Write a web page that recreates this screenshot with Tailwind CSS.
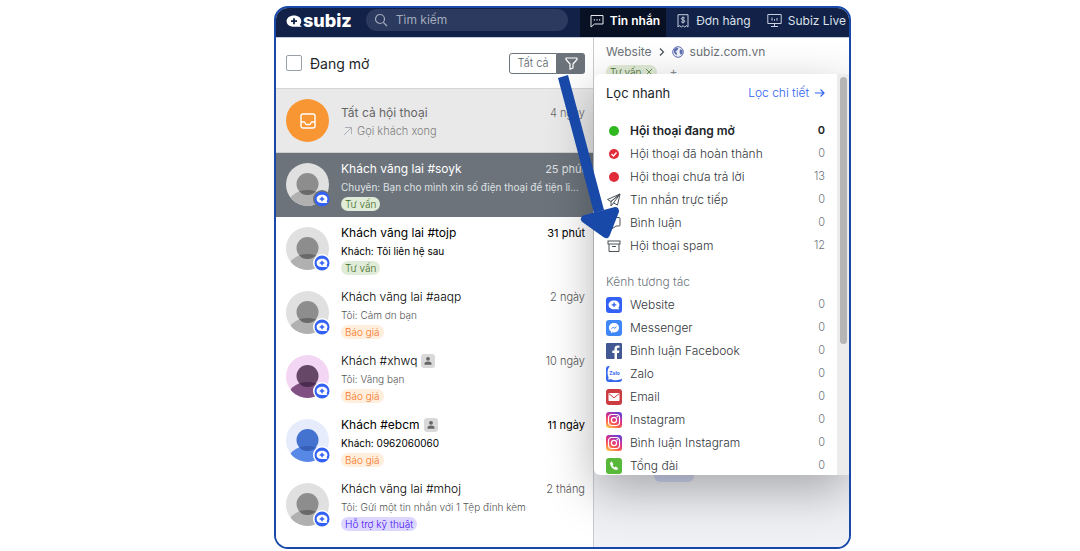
<!DOCTYPE html>
<html lang="vi">
  <head>
    <meta charset="UTF-8" />
    <meta name="viewport" content="width=device-width, initial-scale=1.0" />
    <title>Subiz - Tin nhắn</title>
    <script src="https://cdn.jsdelivr.net/npm/@tailwindcss/browser@4"></script>
  </head>

  <body class="bg-white pl-[274px] pr-[229px] pt-1.5 font-['Inter',sans-serif] text-[12px] font-light text-[#33373d]">
    <!-- Shared icons -->
    <svg class="absolute h-0 w-0" aria-hidden="true">
      <clipPath id="round"><circle cx="21.5" cy="21.5" r="21.5" /></clipPath>
      <clipPath id="face"><circle cx="21.5" cy="21" r="11" /></clipPath>
      <symbol id="avatar-gray" viewBox="0 0 43 43">
        <circle cx="21.5" cy="21.5" r="21.5" fill="#e0e0e0" />
        <g clip-path="url(#round)"><ellipse cx="21.5" cy="45" rx="21" ry="18" fill="#b0b0b0" /></g>
        <circle cx="21.5" cy="21" r="11" fill="#8d8d8d" />
        <g clip-path="url(#face)"><ellipse cx="21.5" cy="45" rx="21" ry="18" fill="#696969" /></g>
      </symbol>
      <symbol id="avatar-purple" viewBox="0 0 43 43">
        <circle cx="21.5" cy="21.5" r="21.5" fill="#f3d6f3" />
        <g clip-path="url(#round)"><ellipse cx="21.5" cy="45" rx="21" ry="18" fill="#7f5081" /></g>
        <circle cx="21.5" cy="21" r="11" fill="#664768" />
        <g clip-path="url(#face)"><ellipse cx="21.5" cy="45" rx="21" ry="18" fill="#4c2b50" /></g>
      </symbol>
      <symbol id="avatar-blue" viewBox="0 0 43 43">
        <circle cx="21.5" cy="21.5" r="21.5" fill="#e6ecfb" />
        <g clip-path="url(#round)"><ellipse cx="21.5" cy="45" rx="21" ry="18" fill="#5888e6" /></g>
        <circle cx="21.5" cy="21" r="11" fill="#4472cf" />
        <g clip-path="url(#face)"><ellipse cx="21.5" cy="45" rx="21" ry="18" fill="#375fb8" /></g>
      </symbol>
      <symbol id="subiz-badge" viewBox="0 0 18 18">
        <circle cx="9" cy="9" r="9" fill="currentColor" />
        <circle cx="9" cy="9" r="7.500" fill="#3461f5" />
        <path d="M9 4.700c3.300 0 5.400 1.700 5.400 4.300 0 1-.3 1.700-.8 2.400l.8 1.700H9c-3.300 0-5.400-1.500-5.400-4.100S5.700 4.700 9 4.700z" fill="#fff" />
        <path d="M9 6.700v4.600M6.700 9h4.600" stroke="#3461f5" stroke-width="1.500" />
      </symbol>
      <symbol id="contact" viewBox="0 0 14 14">
        <rect width="14" height="14" rx="3" fill="#d9d9d9" />
        <circle cx="7" cy="4.800" r="1.900" fill="#666" />
        <path d="M3.500 10.800V9.600c0-1.500 1.500-2.200 3.500-2.200s3.500.7 3.500 2.200v1.200z" fill="#666" />
      </symbol>
      <linearGradient id="ig" x1="0.2" y1="1" x2="0.700" y2="0">
        <stop offset="0" stop-color="#ffc554" />
        <stop offset="0.300" stop-color="#fd5a49" />
        <stop offset="0.600" stop-color="#d92f8a" />
        <stop offset="1" stop-color="#6a3fd6" />
      </linearGradient>
      <symbol id="instagram" viewBox="0 0 16 16">
        <rect width="16" height="16" rx="3" fill="url(#ig)" />
        <rect x="2.500" y="2.500" width="11" height="11" rx="3.200" fill="none" stroke="#fff" stroke-width="1.200" />
        <circle cx="8" cy="8" r="2.600" fill="none" stroke="#fff" stroke-width="1.200" />
        <circle cx="11.200" cy="4.800" r="0.800" fill="#fff" />
      </symbol>
    </svg>

    <div class="relative">
      <div class="overflow-hidden rounded-[14px] border-2 border-[#1849a9]">
        <!-- Top bar -->
        <header class="flex h-[30px] items-stretch border-b border-[#c5cce0] bg-[#112148] text-[#dde1ea]">
          <a href="#" class="flex items-center gap-px pb-1 pl-2.5 text-white">
            <svg class="h-4 w-4" viewBox="0 0 16 16" aria-hidden="true">
              <path d="M8 2.500c4.300 0 7.300 2.400 7.300 5.800 0 1.500-.6 2.700-1.500 3.600l2 1.800H8C3.700 13.700.6 11.500.6 8.200S3.700 2.500 8 2.500z" fill="#fff" />
              <path d="M8 5.200v6M5 8.200h6" stroke="#112148" stroke-width="1.800" />
            </svg>
            <span class="text-[18px] font-extrabold leading-5">subiz</span>
          </a>
          <label class="ml-3.5 mt-px flex h-[22px] w-[202px] items-center gap-2 rounded-full bg-[#2b3a5e] px-2">
            <svg class="h-[14px] w-[14px] shrink-0" viewBox="0 0 14 14" fill="none" stroke="#a4acbd" stroke-width="1.200" aria-hidden="true">
              <circle cx="6" cy="6" r="4.500" /><path d="M9.300 9.300L13 13" />
            </svg>
            <input type="search" aria-label="Tìm kiếm" placeholder="Tìm kiếm" class="w-full min-w-0 bg-transparent font-normal placeholder:text-[#a4acbd] outline-none" />
          </label>
          <nav class="ml-3 flex flex-1 whitespace-nowrap font-normal">
            <a href="#" class="flex items-center gap-1.5 bg-[#081124] pb-1 pl-2.5 pr-1.5 font-semibold text-white">
              <svg class="h-[14px] w-[14px]" viewBox="0 0 14 14" fill="none" stroke="#e6e8ee" aria-hidden="true">
                <path d="M1 1.500h12v8.500H4.500L1 13z" /><path d="M3.800 5.800h1.200M6.400 5.800h1.200M9 5.800h1.200" stroke-width="1.300" />
              </svg>
              Tin nhắn
            </a>
            <a href="#" class="flex items-center gap-1.5 pb-1 pl-2.5">
              <svg class="h-[14px] w-[14px]" viewBox="0 0 14 14" fill="none" stroke="#c8cede" aria-hidden="true">
                <path d="M2 13V.7h10V13l-1.700-1.300L8.700 13 7 11.700 5.300 13l-1.600-1.300z" />
                <path d="M8.800 4.200C8 3.200 5.300 3.300 5.300 4.700c0 1.700 3.600.8 3.600 2.500 0 1.500-2.900 1.600-3.800.4M7 2.500v7" />
              </svg>
              Đơn hàng
            </a>
            <a href="#" class="flex items-center gap-1.5 pb-1 pl-4">
              <svg class="h-[15px] w-[15px]" viewBox="0 0 15 15" fill="none" stroke="#c8cede" aria-hidden="true">
                <path d="M.8 1.500h13.400v9H.8zM7.500 10.500v3M4 13.500h7M5 4.500v3.200M7.500 6v1.700M10 5v2.700" />
              </svg>
              Subiz Live
            </a>
          </nav>
        </header>

        <div class="flex">
          <!-- Conversation list -->
          <section class="w-[318px] shrink-0 border-r border-[#c9cbce] bg-white">
            <div class="flex h-[51px] items-center border-b border-[#d5d5d5] pl-2.5 pr-2">
              <input id="open" type="checkbox" class="h-4 w-4 appearance-none rounded-[2px] border border-[#9aa0a8] bg-white" />
              <label for="open" class="ml-2 text-[14px] font-normal text-[#212529]">Đang mở</label>
              <button class="ml-auto h-[21px] w-12 rounded-l-[3px] border border-[#6c757d] text-[11px] font-light text-[#59616a]">Tất cả</button>
              <button aria-label="Lọc" class="flex h-[21px] w-7 items-center justify-center rounded-r-[3px] bg-[#6c737b]">
                <svg class="h-[13px] w-[13px]" viewBox="0 0 13 13" fill="none" stroke="#fff" stroke-width="1.200" aria-hidden="true">
                  <path d="M1 1h11v1.500L8 7v4l-3 1.300V7L1 2.500z" stroke-linejoin="round" />
                </svg>
              </button>
            </div>
            <ul>
              <li class="flex h-16 gap-3 border-b border-[#cfcfcf] bg-[#e9e9e9] pl-2.5 pr-2 pt-2.5 font-normal text-[#666]">
                <span class="flex h-[43px] w-[43px] shrink-0 items-center justify-center rounded-full bg-[#f89633]">
                  <svg class="h-4 w-4" viewBox="0 0 16 16" fill="none" stroke="#fff" stroke-width="1.400" stroke-linejoin="round" aria-hidden="true">
                    <rect x="1" y="1" width="14" height="14" rx="2" /><path d="M1 9h3.500L6 11.500h4L11.500 9H15" />
                  </svg>
                </span>
                <div class="min-w-0 flex-1 pt-1">
                  <div class="flex leading-5"><span>Tất cả hội thoại</span><span class="ml-auto text-[11px] font-light">4 ngày</span></div>
                  <div class="flex items-center gap-1 pl-0.5 text-[11px] font-light leading-4 text-[#808080]">
                    <svg class="h-2.5 w-2.5" viewBox="0 0 10 10" fill="none" stroke="#aab0b6" aria-hidden="true"><path d="M1 9l7.500-7.500M2 1.500h6.500V8" /></svg>
                    Gọi khách xong
                  </div>
                </div>
              </li>
              <li class="flex h-16 gap-3 bg-[#6c737b] pl-2.5 pr-2 pt-2.5 font-normal text-[#dfe1e3]">
                <span class="relative h-[43px] w-[43px] shrink-0">
                  <svg class="h-full w-full"><use href="#avatar-gray" /></svg>
                  <svg class="absolute -bottom-0.5 -right-0.5 h-[18px] w-[18px] text-[#6c737b]"><use href="#subiz-badge" /></svg>
                </span>
                <div class="min-w-0 flex-1 -mt-1">
                  <div class="flex leading-5"><span class="text-white">Khách vãng lai #soyk</span><span class="ml-auto text-[11px]">25 phút</span></div>
                  <p class="whitespace-nowrap text-[10px] leading-4">Chuyên: Bạn cho mình xin số điện thoại để tiện li...</p>
                  <span class="mt-0.5 inline-block rounded-full bg-[#e1ecd8] px-1 text-[10px] font-light leading-[14px] text-[#3e6b25]">Tư vấn</span>
                </div>
              </li>
              <li class="flex h-16 gap-3 pl-2.5 pr-2 pt-2.5 font-normal text-black">
                <span class="relative h-[43px] w-[43px] shrink-0">
                  <svg class="h-full w-full"><use href="#avatar-gray" /></svg>
                  <svg class="absolute -bottom-0.5 -right-0.5 h-[18px] w-[18px] text-white"><use href="#subiz-badge" /></svg>
                </span>
                <div class="min-w-0 flex-1 -mt-1">
                  <div class="flex leading-5"><span>Khách vãng lai #tojp</span><span class="ml-auto text-[11px]">31 phút</span></div>
                  <p class="truncate text-[10px] leading-4">Khách: Tôi liên hệ sau</p>
                  <span class="mt-0.5 inline-block rounded-full bg-[#e1ecd8] px-1 text-[10px] font-light leading-[14px] text-[#3e6b25]">Tư vấn</span>
                </div>
              </li>
              <li class="flex h-16 gap-3 pl-2.5 pr-2 pt-2.5 text-[#555]">
                <span class="relative h-[43px] w-[43px] shrink-0">
                  <svg class="h-full w-full"><use href="#avatar-gray" /></svg>
                  <svg class="absolute -bottom-0.5 -right-0.5 h-[18px] w-[18px] text-white"><use href="#subiz-badge" /></svg>
                </span>
                <div class="min-w-0 flex-1 -mt-1">
                  <div class="flex leading-5"><span class="text-black">Khách vãng lai #aaqp</span><span class="ml-auto text-[11px]">2 ngày</span></div>
                  <p class="truncate text-[10px] leading-4">Tôi: Cảm ơn bạn</p>
                  <span class="mt-0.5 inline-block rounded-full bg-[#ffeedb] px-1 text-[10px] leading-[14px] text-[#fa7328]">Báo giá</span>
                </div>
              </li>
              <li class="flex h-16 gap-3 pl-2.5 pr-2 pt-2.5 text-[#555]">
                <span class="relative h-[43px] w-[43px] shrink-0">
                  <svg class="h-full w-full"><use href="#avatar-purple" /></svg>
                  <svg class="absolute -bottom-0.5 -right-0.5 h-[18px] w-[18px] text-white"><use href="#subiz-badge" /></svg>
                </span>
                <div class="min-w-0 flex-1 -mt-1">
                  <div class="flex items-center gap-1 leading-5"><span class="text-black">Khách #xhwq</span><svg class="h-[14px] w-[14px]"><use href="#contact" /></svg><span class="ml-auto text-[11px]">10 ngày</span></div>
                  <p class="truncate text-[10px] leading-4">Tôi: Vâng bạn</p>
                  <span class="mt-0.5 inline-block rounded-full bg-[#ffeedb] px-1 text-[10px] leading-[14px] text-[#fa7328]">Báo giá</span>
                </div>
              </li>
              <li class="flex h-16 gap-3 pl-2.5 pr-2 pt-2.5 font-normal text-black">
                <span class="relative h-[43px] w-[43px] shrink-0">
                  <svg class="h-full w-full"><use href="#avatar-blue" /></svg>
                  <svg class="absolute -bottom-0.5 -right-0.5 h-[18px] w-[18px] text-white"><use href="#subiz-badge" /></svg>
                </span>
                <div class="min-w-0 flex-1 -mt-1">
                  <div class="flex items-center gap-1 leading-5"><span>Khách #ebcm</span><svg class="h-[14px] w-[14px]"><use href="#contact" /></svg><span class="ml-auto text-[11px]">11 ngày</span></div>
                  <p class="truncate text-[10px] leading-4">Khách: 0962060060</p>
                  <span class="mt-0.5 inline-block rounded-full bg-[#ffeedb] px-1 text-[10px] font-light leading-[14px] text-[#fa7328]">Báo giá</span>
                </div>
              </li>
              <li class="flex h-[74px] gap-3 pl-2.5 pr-2 pt-2.5 text-[#555]">
                <span class="relative h-[43px] w-[43px] shrink-0">
                  <svg class="h-full w-full"><use href="#avatar-gray" /></svg>
                  <svg class="absolute -bottom-0.5 -right-0.5 h-[18px] w-[18px] text-white"><use href="#subiz-badge" /></svg>
                </span>
                <div class="min-w-0 flex-1 -mt-1">
                  <div class="flex leading-5"><span class="text-black">Khách vãng lai #mhoj</span><span class="ml-auto text-[11px]">2 tháng</span></div>
                  <p class="truncate text-[10px] leading-4">Tôi: Gửi một tin nhắn với 1 Tệp đính kèm</p>
                  <span class="mt-0.5 inline-block rounded-full bg-[#dcd7ff] px-1 text-[10px] leading-[14px] text-[#4a12f5]">Hỗ trợ kỹ thuật</span>
                </div>
              </li>
            </ul>
          </section>

          <!-- Conversation pane with the filter menu over it -->
          <main class="relative min-w-0 flex-1 bg-[#f0f1f5]">
            <div class="h-[52px] bg-white px-3 pt-1 font-normal text-[#6c7278]">
              <div class="flex items-center gap-1.5 leading-5">
                <span>Website</span>
                <svg class="h-2 w-2" viewBox="0 0 8 8" fill="none" stroke="#495057" stroke-width="1.200" aria-hidden="true"><path d="M2 .5L5.500 4 2 7.500" /></svg>
                <svg class="h-3 w-3" viewBox="0 0 12 12" aria-hidden="true">
                  <circle cx="6" cy="6" r="5.300" fill="#eef0fa" stroke="#5f6fae" />
                  <path d="M2 3l3-1.500 1.500 1L5 4.500 3.500 5.500 5 7l-.5 2.500L2 6.500zM8 3l2.500 1.500V7L9 9 7.500 6.500z" fill="#5f6fae" />
                </svg>
                <a href="#">subiz.com.vn</a>
              </div>
              <div class="flex items-center gap-3 pt-[3px]">
                <span class="flex items-center gap-1 rounded-full bg-[#e1ecd8] px-1 text-[10px] font-light leading-[14px] text-[#3e6b25]">Tư vấn
                  <svg class="h-2 w-2" viewBox="0 0 8 8" stroke="#6f9656" aria-hidden="true"><path d="M1 1l6 6M7 1L1 7" /></svg>
                </span>
                <button aria-label="Thêm nhãn" class="leading-[14px] text-[#8a8f95]">+</button>
              </div>
            </div>
            <div class="ml-[60px] mt-[376px] h-4 w-10 rounded-[6px] bg-[#d0d7f2]"></div>

            <div class="absolute left-0 right-0 top-9 flex h-[401px] overflow-hidden rounded-l-[6px] bg-white shadow-[0_16px_48px_rgba(0,0,0,0.3)]">
              <div class="min-w-0 flex-1 pl-3 pr-3 pt-[9px]">
                <div class="flex items-center leading-5 text-[#212529]">
                  <h2 class="text-[13px] font-normal">Lọc nhanh</h2>
                  <a href="#" class="ml-auto flex items-center gap-1.5 text-[#2e62f4]">Lọc chi tiết
                    <svg class="h-2.5 w-2.5" viewBox="0 0 10 10" fill="none" stroke="currentColor" stroke-width="1.200" aria-hidden="true"><path d="M0 5h9M5.500 1.500L9 5 5.500 8.500" /></svg>
                  </a>
                </div>
                <ul class="mt-4">
                  <li class="flex h-[23px] items-center gap-2 font-semibold text-[#212529]">
                    <svg class="h-4 w-4" viewBox="0 0 16 16" aria-hidden="true"><circle cx="8" cy="8" r="5" fill="#2fb81f" /></svg>
                    <span>Hội thoại đang mở</span><span class="ml-auto text-[11px]">0</span>
                  </li>
                  <li class="flex h-[23px] items-center gap-2">
                    <svg class="h-4 w-4" viewBox="0 0 16 16" aria-hidden="true"><circle cx="8" cy="8" r="5" fill="#e02d39" /><path d="M5.500 8l2 2 3-3.500" fill="none" stroke="#fff" stroke-width="1.300" /></svg>
                    <span>Hội thoại đã hoàn thành</span><span class="ml-auto text-[11px] text-[#6c757d]">0</span>
                  </li>
                  <li class="flex h-[23px] items-center gap-2">
                    <svg class="h-4 w-4" viewBox="0 0 16 16" aria-hidden="true"><circle cx="8" cy="8" r="5" fill="#e02d39" /></svg>
                    <span>Hội thoại chưa trả lời</span><span class="ml-auto text-[11px] text-[#6c757d]">13</span>
                  </li>
                  <li class="flex h-[23px] items-center gap-2">
                    <svg class="h-4 w-4" viewBox="0 0 16 16" fill="none" stroke="#495057" stroke-linejoin="round" aria-hidden="true"><path d="M14 2L1.500 7.500 5 9.500zM14 2L5 9.500V14l2.500-3 4 2zM14 2L7.500 11" /></svg>
                    <span>Tin nhắn trực tiếp</span><span class="ml-auto text-[11px] text-[#6c757d]">0</span>
                  </li>
                  <li class="flex h-[23px] items-center gap-2">
                    <svg class="h-4 w-4" viewBox="0 0 16 16" fill="none" stroke="#495057" stroke-linejoin="round" aria-hidden="true"><path d="M3 2.500h10a1 1 0 0 1 1 1V10a1 1 0 0 1-1 1h-3l-3.500 2.500V11H3a1 1 0 0 1-1-1V3.500a1 1 0 0 1 1-1z" /></svg>
                    <span>Bình luận</span><span class="ml-auto text-[11px] text-[#6c757d]">0</span>
                  </li>
                  <li class="flex h-[23px] items-center gap-2">
                    <svg class="h-4 w-4" viewBox="0 0 16 16" fill="none" stroke="#495057" aria-hidden="true"><rect x="2" y="3" width="12" height="3" /><path d="M3 6v7.500h10V6M6 8.500h4" /></svg>
                    <span>Hội thoại spam</span><span class="ml-auto text-[11px] text-[#6c757d]">12</span>
                  </li>
                </ul>
                <h3 class="mt-[13px] leading-[23px] text-[#6c757d]">Kênh tương tác</h3>
                <ul>
                  <li class="flex h-[23px] items-center gap-2">
                    <svg class="h-4 w-4" viewBox="0 0 16 16" aria-hidden="true"><rect width="16" height="16" rx="3" fill="#3461f5" /><path d="M8 3.500c3.300 0 5.400 1.800 5.400 4.500 0 1.100-.4 2-1 2.700l1 1.600H8c-3.300 0-5.400-1.700-5.400-4.300S4.700 3.500 8 3.500z" fill="#fff" /><path d="M8 5.500v4.600M5.700 7.800h4.600" stroke="#3461f5" stroke-width="1.300" /></svg>
                    <span>Website</span><span class="ml-auto text-[11px] text-[#6c757d]">0</span>
                  </li>
                  <li class="flex h-[23px] items-center gap-2">
                    <svg class="h-4 w-4" viewBox="0 0 16 16" aria-hidden="true"><rect width="16" height="16" rx="3" fill="#3f86f7" /><path d="M8 3c3 0 5 2 5 4.700s-2 4.700-5 4.700l-1.300-.2-1.700.9v-1.600C3.700 10.600 3 9.300 3 7.700 3 5 5 3 8 3z" fill="#fff" /><path d="M5.500 8.800l1.800-1.800 1.400 1.400 1.800-1.700" fill="none" stroke="#3f86f7" /></svg>
                    <span>Messenger</span><span class="ml-auto text-[11px] text-[#6c757d]">0</span>
                  </li>
                  <li class="flex h-[23px] items-center gap-2">
                    <svg class="h-4 w-4" viewBox="0 0 16 16" aria-hidden="true"><rect width="16" height="16" rx="1" fill="#415893" /><path d="M8.500 16v-6H6.300V7.600h2.200V5.800c0-2.200 1.300-3.300 3.300-3.300h1.700v2.200h-1.200c-1 0-1.300.5-1.300 1.200v1.700h2.400l-.4 2.400h-2v6z" fill="#fff" /></svg>
                    <span>Bình luận Facebook</span><span class="ml-auto text-[11px] text-[#6c757d]">0</span>
                  </li>
                  <li class="flex h-[23px] items-center gap-2">
                    <svg class="h-4 w-4" viewBox="0 0 16 16" aria-hidden="true"><rect width="16" height="16" rx="3" fill="#3568ee" /><path d="M4 0h12v12.500c-3 2-8 2.200-11.300.4-1 .6-2 .7-3 .5 1-.7 1-1.500.7-2.500C1 7 1.500 2.500 4 0z" fill="#fff" /><text x="3.200" y="8.600" font-size="5" font-weight="700" fill="#3568ee">Zalo</text></svg>
                    <span>Zalo</span><span class="ml-auto text-[11px] text-[#6c757d]">0</span>
                  </li>
                  <li class="flex h-[23px] items-center gap-2">
                    <svg class="h-4 w-4" viewBox="0 0 16 16" aria-hidden="true"><rect width="16" height="16" rx="3" fill="#cc3b40" /><rect x="2.500" y="4" width="11" height="8" rx="0.800" fill="#fff" /><path d="M3 4.800l5 4 5-4" fill="none" stroke="#cc3b40" /></svg>
                    <span>Email</span><span class="ml-auto text-[11px] text-[#6c757d]">0</span>
                  </li>
                  <li class="flex h-[23px] items-center gap-2">
                    <svg class="h-4 w-4" aria-hidden="true"><use href="#instagram" /></svg>
                    <span>Instagram</span><span class="ml-auto text-[11px] text-[#6c757d]">0</span>
                  </li>
                  <li class="flex h-[23px] items-center gap-2">
                    <svg class="h-4 w-4" aria-hidden="true"><use href="#instagram" /></svg>
                    <span>Bình luận Instagram</span><span class="ml-auto text-[11px] text-[#6c757d]">0</span>
                  </li>
                  <li class="flex h-[23px] items-center gap-2">
                    <svg class="h-4 w-4" viewBox="0 0 16 16" aria-hidden="true"><rect width="16" height="16" rx="3" fill="#57b83a" /><path d="M4.200 4.500l1.600-.9 1.600 2.600-.9 1c.5 1 1.300 1.700 2.200 2.200l1.100-.9 2.400 1.700-.9 1.600c-3.600.8-7.700-3.500-7.100-7.300z" fill="#fff" /></svg>
                    <span>Tổng đài</span><span class="ml-auto text-[11px] text-[#6c757d]">0</span>
                  </li>
                </ul>
              </div>
              <div class="w-3 bg-[#ececec] pl-[3px] pr-0.5 pt-[3px]"><div class="h-[267px] rounded-full bg-[#b5b5b5]"></div></div>
            </div>
          </main>
        </div>
      </div>

      <!-- Arrow pointing from the filter button to the spam filter -->
      <svg class="pointer-events-none absolute left-[282px] top-[66px] h-[170px] w-[66px]" viewBox="0 0 66 170" fill="#1849a9" stroke="#1849a9" aria-hidden="true">
        <path d="M2 6l10-3 36 135-10 3z" stroke="none" />
        <path d="M29 147l30-8L50 162z" stroke-width="8" stroke-linejoin="round" />
      </svg>
    </div>
  </body>
</html>
